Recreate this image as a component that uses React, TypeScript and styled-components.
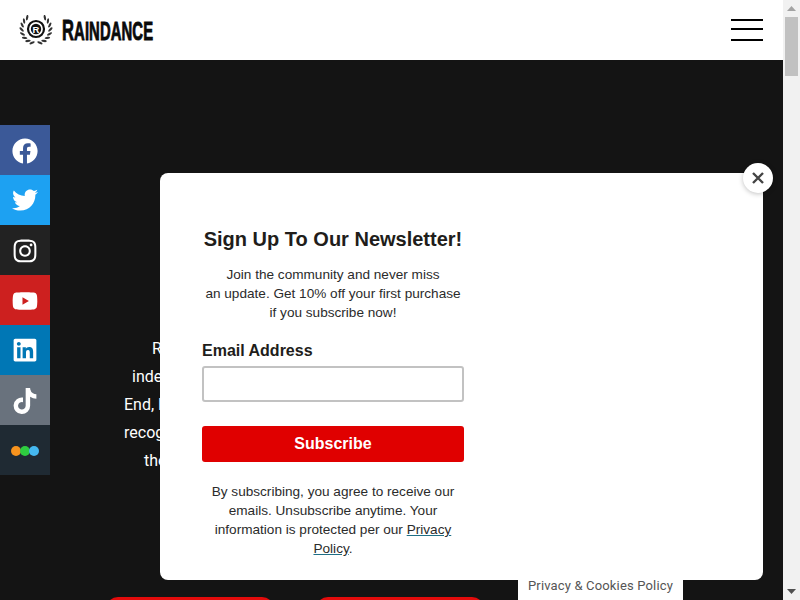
import React from "react";
import styled, { createGlobalStyle } from "styled-components";
import { FaFacebook, FaTwitter, FaInstagram, FaYoutube, FaLinkedin, FaTiktok } from "react-icons/fa";

const Global = createGlobalStyle`
  html, body { margin: 0; padding: 0; height: 100%; overflow: hidden; background: #fff; }
  * { box-sizing: border-box; }
`;

const Viewport = styled.div`
  position: relative; width: 800px; height: 600px; overflow: hidden; display: flex;
  font-family: "Liberation Sans", Arial, sans-serif;
`;
const Page = styled.div`
  width: 783px; height: 600px; display: flex; flex-direction: column; overflow: hidden;
`;
const Header = styled.header`
  height: 60px; flex: none; background: #fff; display: flex; align-items: center;
  justify-content: space-between; padding: 0 20px 0 19px;
`;
const Brand = styled.a`
  display: flex; align-items: center; gap: 9px; height: 30px;
`;
const Wordmark = styled.span`
  display: inline-block; width: 92px; white-space: nowrap; color: #0a0a0a;
  font-family: "Liberation Sans Narrow", "Liberation Sans", sans-serif; font-weight: 700;
  font-size: 26px; line-height: 26px; letter-spacing: .2px;
  transform: scaleX(.57); transform-origin: left center; -webkit-text-stroke: .9px #0a0a0a;
`;
const BigInitial = styled.span`
  font-size: 29px;
`;
const Burger = styled.button`
  display: flex; flex-direction: column; width: 32px; padding: 0; border: 0; background: none;
`;
const BurgerBar = styled.span<{ $gap: number }>`
  display: block; height: 2px; background: #000; margin-top: ${p => p.$gap}px;
`;
const Main = styled.main`
  flex: 1; background: #141414; padding-top: 275px; color: #fff;
  font-family: Roboto, sans-serif;
`;
const Copy = styled.div`
  font-size: 16px; line-height: 28px; height: 140px;
`;
const CopyLine = styled.span<{ $indent: number }>`
  display: block; white-space: nowrap; margin-left: ${p => p.$indent}px;
`;
const Actions = styled.div`
  display: flex; gap: 42px; padding: 122px 0 0 106px;
`;
const RedAction = styled.a`
  display: block; width: 168px; height: 44px; background: #e30b0b; border-radius: 12px;
`;
const Rail = styled.nav`
  position: absolute; left: 0; top: 125px; width: 50px; display: flex; flex-direction: column;
`;
const RailItem = styled.a<{ $bg: string; $nudge: number }>`
  width: 50px; height: 50px; display: flex; align-items: center; justify-content: center;
  background: ${p => p.$bg}; color: #fff; font-size: 26px; padding-top: ${p => p.$nudge}px;
`;
const Dots = styled.span`
  display: flex;
`;
const Dot = styled.span<{ $color: string }>`
  width: 10px; height: 10px; border-radius: 50%; background: ${p => p.$color}; margin-left: -1px;
`;
const CookieTab = styled.a`
  position: absolute; left: 518px; bottom: 0; width: 165px; height: 30px; background: #fff;
  display: flex; align-items: flex-end; justify-content: center; padding-bottom: 6px;
  font: 13px/16px Roboto, sans-serif; color: #555; letter-spacing: .16px;
`;
const Modal = styled.div`
  position: absolute; left: 160px; top: 173px; width: 603px; height: 407px; background: #fff;
  border-radius: 8px; padding: 54px 0 0 42px; color: #211d1a;
`;
const Form = styled.form`
  width: 262px; display: flex; flex-direction: column;
`;
const Title = styled.h2`
  margin: 0 0 14px; font-size: 20px; line-height: 24px; font-weight: 700; text-align: center;
  white-space: nowrap;
`;
const Blurb = styled.p`
  margin: 0; font-size: 13.6px; line-height: 19px; text-align: center; color: #2b2b2b;
`;
const FieldLabel = styled.label`
  margin-top: 19px; font-size: 16px; line-height: 20px; font-weight: 700; display: block;
`;
const EmailInput = styled.input`
  margin-top: 5px; width: 262px; height: 36px; border: 2px solid #c2c2c2; border-radius: 3px;
  background: #fff; outline: none;
`;
const Submit = styled.button`
  margin-top: 24px; height: 36px; width: 262px; border: 0; border-radius: 3px; background: #e00000;
  color: #fff; font: 700 16px "Liberation Sans", sans-serif;
`;
const Legal = styled.p`
  margin: 20px 0 0; font-size: 13.6px; line-height: 19px; text-align: center; color: #2b2b2b;
`;
const LegalLink = styled.a`
  color: #2b2b2b; text-decoration: underline; text-decoration-color: #1f6f86;
`;
const Close = styled.button`
  position: absolute; left: 743px; top: 163px; width: 30px; height: 30px; padding: 0; border: 0;
  border-radius: 50%; background: #fff; box-shadow: 0 1px 5px rgba(0,0,0,.25);
  display: flex; align-items: center; justify-content: center;
`;
const Scrollbar = styled.div`
  width: 17px; height: 600px; background: #f1f1f1; display: flex; flex-direction: column;
  align-items: center; justify-content: space-between;
`;
const ArrowBox = styled.div`
  width: 17px; height: 17px; display: flex; align-items: center; justify-content: center;
`;
const Thumb = styled.div`
  width: 13px; height: 59px; background: #c1c1c1;
`;
const ScrollTop = styled.div`
  display: flex; flex-direction: column; align-items: center;
`;

const leaves = (side: 1 | -1) =>
  [38, 56, 74, 92, 110, 128, 146, 164].map(a => {
    const r = (a * Math.PI) / 180;
    const x = 17 + side * 14.4 * Math.sin(r);
    const y = 14 - 14.4 * Math.cos(r);
    return (
      <ellipse key={`${side}${a}`} cx={x} cy={y} rx="1.1" ry="2.8" fill="#333"
        transform={`rotate(${side * (a - 48)} ${x} ${y})`} />
    );
  });

const Logo = () => (
  <svg width="34" height="30" viewBox="0 0 34 30" aria-hidden="true">
    {leaves(1)}
    {leaves(-1)}
    <circle cx="17" cy="14" r="8" fill="#fff" stroke="#111" strokeWidth="2.2" />
    <circle cx="17" cy="14" r="5.2" fill="#111" />
    <text x="17" y="17.500" textAnchor="middle" fontFamily="Liberation Sans" fontWeight="700" fontSize="9.5" fill="#fff">R</text>
  </svg>
);

const socials = [
  { bg: "#3b5998", nudge: 2, icon: <FaFacebook /> },
  { bg: "#1da1f2", nudge: 0, icon: <FaTwitter /> },
  { bg: "#222222", nudge: 2, icon: <FaInstagram /> },
  { bg: "#cd201f", nudge: 2, icon: <FaYoutube /> },
  { bg: "#0077b5", nudge: 0, icon: <FaLinkedin /> },
  { bg: "#69727d", nudge: 2, icon: <FaTiktok /> },
  {
    bg: "#1f2a33",
    nudge: 2,
    icon: (
      <Dots>
        <Dot $color="#f7931e" />
        <Dot $color="#2ecc40" />
        <Dot $color="#45b8f0" />
      </Dots>
    ),
  },
];

export default function App() {
  return (
    <Viewport>
      <Global />
      <Page>
        <Header>
          <Brand>
            <Logo />
            <Wordmark><BigInitial>R</BigInitial>AINDANCE</Wordmark>
          </Brand>
          <Burger aria-label="Menu">
            <BurgerBar $gap={0} />
            <BurgerBar $gap={7} />
            <BurgerBar $gap={9} />
          </Burger>
        </Header>
        <Main>
          <Copy>
            <CopyLine $indent={152}>Raindance is the home of independent film education,</CopyLine>
            <CopyLine $indent={132}>independent filmmakers trained in the heart of London's West</CopyLine>
            <CopyLine $indent={124}>End, Raindance runs courses and a film festival that are widely</CopyLine>
            <CopyLine $indent={124}>recognised as among the very best for new film talent</CopyLine>
            <CopyLine $indent={144}>the world over.</CopyLine>
          </Copy>
          <Actions>
            <RedAction />
            <RedAction />
          </Actions>
        </Main>
      </Page>
      <Scrollbar>
        <ScrollTop>
          <ArrowBox>
            <svg width="9" height="5" viewBox="0 0 9 5"><path d="M4.5 0 9 5H0z" fill="#a3a3a3" /></svg>
          </ArrowBox>
          <Thumb />
        </ScrollTop>
        <ArrowBox>
          <svg width="9" height="5" viewBox="0 0 9 5"><path d="M0 0h9L4.500 5z" fill="#505050" /></svg>
        </ArrowBox>
      </Scrollbar>
      <Rail>
        {socials.map((s, i) => (
          <RailItem key={i} $bg={s.bg} $nudge={s.nudge}>{s.icon}</RailItem>
        ))}
      </Rail>
      <CookieTab>Privacy &amp; Cookies Policy</CookieTab>
      <Modal>
        <Form>
          <Title>Sign Up To Our Newsletter!</Title>
          <Blurb>
            Join the community and never miss<br />
            an update. Get 10% off your first purchase<br />
            if you subscribe now!
          </Blurb>
          <FieldLabel htmlFor="email">Email Address</FieldLabel>
          <EmailInput id="email" type="email" />
          <Submit type="button">Subscribe</Submit>
          <Legal>
            By subscribing, you agree to receive our emails. Unsubscribe anytime. Your information is
            protected per our <LegalLink>Privacy Policy</LegalLink>.
          </Legal>
        </Form>
      </Modal>
      <Close aria-label="Close">
        <svg width="14" height="14" viewBox="0 0 14 14"><path d="M2 2l10 10M12 2 2 12" stroke="#444" strokeWidth="2.4" /></svg>
      </Close>
    </Viewport>
  );
}
